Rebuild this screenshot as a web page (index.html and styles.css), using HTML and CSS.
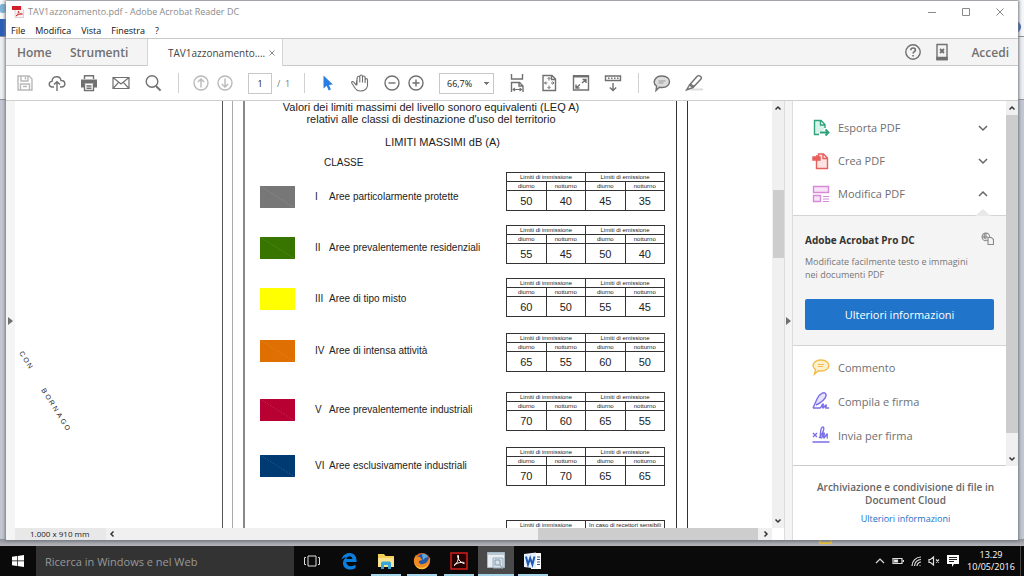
FILE: index.html
```html
<!DOCTYPE html>
<html lang="it">
<head>
<meta charset="utf-8">
<title>TAV1azzonamento.pdf - Adobe Acrobat Reader DC</title>
<link rel="stylesheet" href="styles.css">
</head>
<body>
<div class="desktop">
  <div class="backdrop" aria-hidden="true">
    <div class="back-head"><i class="back-logo"></i><i class="back-file"></i><i class="back-help"></i></div>
    <div class="back-body"></div>
    <div class="back-status"><i class="back-view"></i></div>
  </div>

  <div class="window">
    <header class="titlebar">
      <svg class="app-icon" viewBox="0 0 12 12"><path d="M3 1h6l2.500 3v7.500H3z" fill="#f7f1f1" stroke="#c9b9b9" stroke-width=".6"/><path d="M0 0h9v4H0z" fill="#d0202a"/><path d="M4 10c2-1.500 2.500-3.500 2.500-5 0 2 1.500 3 4 3-2.500 0-4.500.5-6.500 2z" fill="none" stroke="#d0202a" stroke-width=".8"/></svg>
      <h1 class="title">TAV1azzonamento.pdf - Adobe Acrobat Reader DC</h1>
      <div class="window-buttons">
        <button aria-label="Riduci"><svg viewBox="0 0 10 10"><path d="M1 5.500h8"/></svg></button>
        <button aria-label="Ingrandisci"><svg viewBox="0 0 10 10"><path d="M1.500 1.500h7v7h-7z"/></svg></button>
        <button aria-label="Chiudi"><svg viewBox="0 0 10 10"><path d="M1.500 1.500l7 7m0-7l-7 7"/></svg></button>
      </div>
    </header>
    <nav class="menubar">
      <button>File</button><button>Modifica</button><button>Vista</button><button>Finestra</button><button>?</button>
    </nav>
    <nav class="tabs">
      <button class="tab home">Home</button>
      <button class="tab tools">Strumenti</button>
      <div class="tab-active"><span>TAV1azzonamento....</span><button class="tab-close" aria-label="Chiudi scheda"><svg viewBox="0 0 6 6"><path d="M.5.5l5 5m0-5l-5 5"/></svg></button></div>
      <div class="account">
        <button aria-label="Guida"><svg class="ico" viewBox="0 0 18 18"><circle cx="9" cy="9" r="7.200"/><path d="M6.800 7.200c0-3 4.600-2.800 4.600-.2 0 1.700-2.300 1.800-2.300 3.600M9.100 12v1.600" stroke-width="1.600"/></svg></button>
        <button aria-label="Dispositivi"><svg class="ico" viewBox="0 0 18 18"><path d="M4 1.500h10v15H4z" /><path d="M4 14.500h10v2H4z" fill="#707070"/><path d="M7 6l4 4m0-4l-4 4" stroke-width="1.800"/></svg></button>
        <button class="login">Accedi</button>
      </div>
    </nav>

    <div class="toolbar">
      <button class="pale" aria-label="Salva"><svg class="ico" viewBox="0 0 18 18"><path d="M2 2h11l3 3v11H2zM5 2v5h7V2M4.500 16v-6h9v6M9.500 3v2.500M7 12.500h4"/></svg></button>
      <button aria-label="Carica"><svg class="ico" viewBox="0 0 18 18"><path d="M6 13H4.500C.2 13 .3 7.500 4 7.400 4.300 1.400 12.200 1.200 13 6.500c5-.2 5.200 6.500.5 6.500H12M9 17V8M6 10.600L9 7.800l3 2.800"/></svg></button>
      <button aria-label="Stampa"><svg class="ico" viewBox="0 0 18 18"><path d="M4.500 5V1.700h9V5"/><path d="M1 5.500h16v8h-3v-4H4v4H1z" fill="#707070" stroke="none"/><path d="M4.500 9.500v7h9v-7M6.500 12h5M6.500 14.300h5"/></svg></button>
      <button aria-label="Posta"><svg class="ico" viewBox="0 0 18 18"><path d="M1 3.500h16v11H1zM1 3.500l8 6.500 8-6.500M1 14.500l5.800-6.300M17 14.500l-5.800-6.300" stroke-width="1.200"/></svg></button>
      <button aria-label="Cerca"><svg class="ico" viewBox="0 0 18 18"><circle cx="8" cy="7.500" r="5.800"/><path d="M12 12l4.600 4.600" stroke-width="2"/></svg></button>
      <i class="sep"></i>
      <button class="small pale" aria-label="Pagina precedente"><svg class="ico" viewBox="0 0 18 18"><circle cx="9" cy="9" r="7"/><path d="M9 13.500V5M5.800 8L9 5l3.200 3"/></svg></button>
      <button class="small pale" aria-label="Pagina successiva"><svg class="ico" viewBox="0 0 18 18"><circle cx="9" cy="9" r="7"/><path d="M9 4.500V13M5.800 10L9 13l3.200-3"/></svg></button>
      <input class="page-number" type="text" value="1" aria-label="Numero di pagina">
      <span class="page-total">/&nbsp; 1</span>
      <i class="sep after-pages"></i>
      <button aria-label="Selezione"><svg class="ico" viewBox="0 0 18 18"><path d="M4.500 1.500v13l3.200-2.800 2 4.800 2.200-1-2-4.600 4-.4z" fill="#2a7de1" stroke="none"/></svg></button>
      <button aria-label="Mano"><svg class="ico" viewBox="0 0 18 18"><path d="M5 11L2.800 8.200C1.500 6.800 0 8 1 9.500l3.500 5.300C7 18.300 15.500 18 16.500 11.500V6c0-1.800-2.200-1.800-2.400 0V3.400c0-1.800-2.500-1.800-2.600 0v-1c-.1-1.800-2.600-1.800-2.700 0v1.100c-.1-1.600-2.400-1.600-2.500 0zM8.800 3v5.500M11.500 3v5.500M14.100 5v4M6 4v7" stroke-width="1.100"/></svg></button>
      <button class="small zoom-out" aria-label="Riduci zoom"><svg class="ico" viewBox="0 0 18 18"><circle cx="9" cy="9" r="7"/><path d="M5.500 9h7"/></svg></button>
      <button class="small" aria-label="Aumenta zoom"><svg class="ico" viewBox="0 0 18 18"><circle cx="9" cy="9" r="7"/><path d="M5.500 9h7M9 5.500v7"/></svg></button>
      <select class="zoom" aria-label="Zoom"><option>66,7%</option></select>
      <button aria-label="Adatta larghezza"><svg class="ico" viewBox="0 0 18 18"><path d="M3.500 0v5h11V0M3.500 18V8.500h8l3.500 3.500v6M11 8.500V12h4"/><path d="M5 15.500h8.500M7 13.800l-2 1.700 2 1.700M11.500 13.800l2 1.700-2 1.700" stroke-width="1.100"/></svg></button>
      <button aria-label="Adatta pagina"><svg class="ico" viewBox="0 0 18 18"><path d="M3 1.500h9l3.500 3.500v11.500H3zM11.500 1.500V5.500h4"/><path d="M9 3.500v3M9 11.500v3M4.500 9h3M11 9h3M7.500 5L9 3.500 10.500 5M7.500 13L9 14.500l1.500-1.500M6 7.500L4.500 9 6 10.500M12.500 7.500L14 9l-1.500 1.500" stroke-width="1"/></svg></button>
      <button aria-label="Schermo intero"><svg class="ico" viewBox="0 0 18 18"><path d="M1.500 2h15v14h-15z"/><path d="M1 1h16v2.500H1z" fill="#707070" stroke="none"/><path d="M10 9l4-3.500M10.500 5.500H14V9M8 10.500L4 14M4 10.500V14h3.500"/></svg></button>
      <button aria-label="Mostra barra"><svg class="ico" viewBox="0 0 18 18"><path d="M1.500 2h15v4.500h-15z"/><path d="M4 4.200h1.500m1.500 0h1.500m1.500 0h1.500m1.500 0h1.500M9 9v7.500M5.800 13.500L9 16.500l3.200-3"/></svg></button>
      <i class="sep"></i>
      <button aria-label="Commento"><svg class="ico" viewBox="0 0 18 18"><path d="M9 2c10 0 10 11.500 0 11.500-1 0-1.800-.1-2.600-.3L3 16.500l.6-4.500C-1 9 1.500 2 9 2z" fill="#ddd"/><path d="M5.500 7h7M5.500 9h5" stroke="#999" stroke-width="1"/></svg></button>
      <button aria-label="Evidenzia"><svg class="ico" viewBox="0 0 18 18"><path d="M7 14.500h11v2H5z" fill="#ddd" stroke="none"/><path d="M4.500 11L12 2.500c1.500-2 5.500 0 4 2.500L8 13.500zM4.500 11L1.500 16l6.500-2.500M5.500 10l3.500 2.500"/></svg></button>
    </div>

    <div class="content">
      <button class="gutter" aria-label="Mostra riquadro di navigazione"><i></i></button>
      <main class="viewer">
        <div class="page">
          <svg class="map" viewBox="0 0 207 427" preserveAspectRatio="xMinYMin meet"><g font-family="Liberation Sans, sans-serif" font-size="7" fill="#222"><text transform="translate(4 252) rotate(58)" x="0 7 14">CON</text><text transform="translate(26 289) rotate(58)" x="0 7 14 21 29 36 43">BORNAGO</text></g></svg>
          <div class="frame-outer"></div>
          <div class="frame-inner"></div>
          <section class="legend">
            <div class="legend-title">
              <p>Valori dei limiti massimi del livello sonoro equivalenti (LEQ A)</p>
              <p>relativi alle classi di destinazione d'uso del territorio</p>
            </div>
            <p class="legend-limits">LIMITI MASSIMI dB (A)</p>
            <p class="legend-class">CLASSE</p>
            <div class="legend-body">
              <ul class="classes">
                <li><i class="swatch gray"></i><b>I</b><span>Aree particolarmente protette</span></li>
                <li><i class="swatch green"></i><b>II</b><span>Aree prevalentemente residenziali</span></li>
                <li><i class="swatch yellow"></i><b>III</b><span>Aree di tipo misto</span></li>
                <li class="intense"><i class="swatch orange"></i><b>IV</b><span>Aree di intensa attività</span></li>
                <li class="industry"><i class="swatch red"></i><b>V</b><span>Aree prevalentemente industriali</span></li>
                <li class="industry-only"><i class="swatch blue"></i><b>VI</b><span>Aree esclusivamente industriali</span></li>
              </ul>
              <div class="limits">
                <table><tr><th colspan="2">Limiti di immissione</th><th colspan="2">Limiti di emissione</th></tr><tr><th>diurno</th><th>notturno</th><th>diurno</th><th>notturno</th></tr><tr><td>50</td><td>40</td><td>45</td><td>35</td></tr></table>
                <table><tr><th colspan="2">Limiti di immissione</th><th colspan="2">Limiti di emissione</th></tr><tr><th>diurno</th><th>notturno</th><th>diurno</th><th>notturno</th></tr><tr><td>55</td><td>45</td><td>50</td><td>40</td></tr></table>
                <table><tr><th colspan="2">Limiti di immissione</th><th colspan="2">Limiti di emissione</th></tr><tr><th>diurno</th><th>notturno</th><th>diurno</th><th>notturno</th></tr><tr><td>60</td><td>50</td><td>55</td><td>45</td></tr></table>
                <table class="step"><tr><th colspan="2">Limiti di immissione</th><th colspan="2">Limiti di emissione</th></tr><tr><th>diurno</th><th>notturno</th><th>diurno</th><th>notturno</th></tr><tr><td>65</td><td>55</td><td>60</td><td>50</td></tr></table>
                <table class="lower"><tr><th colspan="2">Limiti di immissione</th><th colspan="2">Limiti di emissione</th></tr><tr><th>diurno</th><th>notturno</th><th>diurno</th><th>notturno</th></tr><tr><td>70</td><td>60</td><td>65</td><td>55</td></tr></table>
                <table class="step"><tr><th colspan="2">Limiti di immissione</th><th colspan="2">Limiti di emissione</th></tr><tr><th>diurno</th><th>notturno</th><th>diurno</th><th>notturno</th></tr><tr><td>70</td><td>70</td><td>65</td><td>65</td></tr></table>
                <table class="last"><tr><th>Limiti di immissione</th><th>In caso di recettori sensibili</th></tr></table>
              </div>
            </div>
          </section>
          <div class="frame-right"></div>
        </div>
        <div class="vscroll">
          <svg class="arrow" viewBox="0 0 8 8"><path d="M1.500 5.500L4 3l2.500 2.500"/></svg>
          <i class="vthumb"></i>
          <svg class="arrow" viewBox="0 0 8 8"><path d="M1.500 2.500L4 5l2.500-2.500"/></svg>
        </div>
        <div class="hscroll">
          <span class="page-size">1.000 x 910 mm</span>
          <svg class="arrow" viewBox="0 0 8 8"><path d="M5.500 1.500L3 4l2.500 2.500"/></svg>
          <i class="hthumb"></i>
          <svg class="arrow" viewBox="0 0 8 8"><path d="M2.500 1.500L5 4 2.500 6.500"/></svg>
        </div>
      </main>
      <button class="gutter right" aria-label="Nascondi riquadro strumenti"><i></i></button>
      <aside class="panel">
        <div class="panel-scroll">
          <div class="panel-list">
            <div class="tool-group">
              <button class="tool"><svg viewBox="0 0 18 18" stroke="#2fa47c"><path d="M7 15.500H2.500v-14H9l4 4V9M8.500 1.500V6H13" fill="#d9f2e8"/><path d="M8 13.500h8M13.500 10.500l3 3-3 3" stroke-width="2"/></svg><span>Esporta PDF</span><svg class="chev" viewBox="0 0 10 10"><path d="M1 3l4 4 4-4"/></svg></button>
              <button class="tool"><svg viewBox="0 0 18 18" stroke="#e8605c"><path d="M4.500 8v8.500h11V6l-4-4h-5v3M11 2v4.500h4.500" fill="#fde3e1"/><path d="M1 5h7v3H1zM5 3v6" stroke-width="1.500" fill="#e8605c"/></svg><span>Crea PDF</span><svg class="chev" viewBox="0 0 10 10"><path d="M1 3l4 4 4-4"/></svg></button>
              <button class="tool"><svg viewBox="0 0 18 18" stroke="#d58bd8"><path d="M1.500 1.500h15v6h-15zM1.500 10.500h7v6h-7z" fill="#f8e3f9"/><path d="M11 11.500h6M11 14h6M11 16.500h6" stroke-width="1"/></svg><span>Modifica PDF</span><svg class="chev" viewBox="0 0 10 10"><path d="M1 7l4-4 4 4"/></svg></button>
            </div>
            <section class="promo">
              <i class="notch"></i>
              <div class="promo-head"><h2>Adobe Acrobat Pro DC</h2><svg viewBox="0 0 12 12"><circle cx="4.500" cy="4.500" r="3.500"/><path d="M1 4.500h5M4.500 1v6M3 1.500v5M6.500 5h3l2 2v4.500h-5z" fill="#f4f4f4"/></svg></div>
              <p>Modificate facilmente testo e immagini<br>nei documenti PDF</p>
              <button class="cta">Ulteriori informazioni</button>
            </section>
            <div class="tool-group lower-tools">
              <button class="tool"><svg viewBox="0 0 18 18" stroke="#f2bd4b"><path d="M9 2c10.500 0 10.500 11 0 11-1 0-1.800-.1-2.600-.3L2.500 16l1-4.500C-1.500 8 2 2 9 2z" fill="#fdf0cf"/><path d="M6 6.500h6M6 8.500h5" stroke-width="1"/></svg><span>Commento</span></button>
              <button class="tool"><svg viewBox="0 0 18 18" stroke="#7b6fe8"><path d="M1 16L5 7C8 1 13-1 14 2.500 15 6 9 11 4 13" fill="#e7e4ff"/><path d="M1 16h7c2-1 2-4 3-4s-1 4 0 4 2-3 3-3-1 3 0 3h3"/></svg><span>Compila e firma</span></button>
              <button class="tool"><svg viewBox="0 0 18 18" stroke="#7b6fe8"><path d="M1 7l4 4m0-4l-4 4M7 12C11 8 13 1 11 1 8 1 8 12 9 12c2 0 2-5 3-5s-1 5 0 5 2-4 3-4-1 4 1 4M.5 16h17"/></svg><span>Invia per firma</span></button>
            </div>
          </div>
          <div class="panel-bar">
            <svg class="arrow" viewBox="0 0 8 8"><path d="M1.500 5.500L4 3l2.500 2.500"/></svg>
            <i class="panel-thumb"></i>
            <svg class="arrow" viewBox="0 0 8 8"><path d="M1.500 2.500L4 5l2.500-2.500"/></svg>
          </div>
        </div>
        <footer class="cloud">
          <h2>Archiviazione e condivisione di file in<br>Document Cloud</h2>
          <a href="#">Ulteriori informazioni</a>
        </footer>
      </aside>
    </div>
  </div>
</div>

<footer class="taskbar">
  <button class="start" aria-label="Start"><svg viewBox="0 0 12 12"><path d="M0 1.700L5 1v4.600H0zM5.700.9L12 0v5.600H5.700zM0 6.300h5v4.700l-5-.7zM5.700 6.300H12V12l-6.300-.9z" fill="#fff"/></svg></button>
  <input class="search" type="text" placeholder="Ricerca in Windows e nel Web" aria-label="Ricerca">
  <div class="apps">
    <button aria-label="Visualizzazione attività"><svg viewBox="0 0 18 18" fill="none" stroke="#ddd"><path d="M5 4h8v10H5zM3 5.500H1.500v7H3M15 5.500h1.500v7H15"/></svg></button>
    <button aria-label="Edge"><svg viewBox="0 0 18 18"><path d="M1.500 8C2.500 3 6 1 9.500 1 14 1 17 4.300 16.500 10H6.200c.3 4.800 6 5 9.300 2.800v3.400C8 19.500 2.500 16 3 10.500 3.200 8 5 6 6.800 5.300 4.500 5.200 2.700 6.300 1.500 8zm4.900-1h6c0-4-5.500-3.500-6 0z" fill="#0b7fe0"/></svg></button>
    <button class="open" aria-label="Esplora file"><svg viewBox="0 0 18 18"><path d="M1 2h6l1.500 2H17v11H1z" fill="#f4cf55"/><path d="M1 6h16v9H1z" fill="#fbe38b"/><path d="M4 17v-5.500C4 10 5 9.500 6 9.500h6c1 0 2 .5 2 2V17h-3v-4H7v4z" fill="#37a6dd"/></svg></button>
    <button class="open" aria-label="Firefox"><svg viewBox="0 0 18 18"><circle cx="9" cy="9" r="8" fill="#e8651a"/><circle cx="10" cy="7.500" r="5.800" fill="#2458a6"/><path d="M9 2c3-1 5 1 6 3l-3 1-2 2z" fill="#5da6dc"/><path d="M1 7l2-4 1 2c3-1 4 1 5 3l-3 1c-1 4 5 4 8 1l3-5c1 7-3 12-8 12S0 13 1 7z" fill="#f08a24"/><path d="M2 12c3 5 10 5 13 0-1 7-11 7-13 0z" fill="#f7c23c"/></svg></button>
    <button class="open" aria-label="Acrobat"><svg viewBox="0 0 18 18"><path d="M1 1h16v16H1z" fill="#240000" stroke="#d21c1c" stroke-width="1.500"/><path d="M4 13.500C7 12 9 7 8.500 4c0-1.500-1.500-1-.8 1C8.500 8 11 11 14 11.500c1.500-.5-.5-1.500-2.500-1.200-3 .4-6 1.200-7.500 3.200z" fill="none" stroke="#fff"/></svg></button>
    <button class="open current" aria-label="Strumento di cattura"><svg viewBox="0 0 18 18"><path d="M.5.500h17v15H.5z" fill="#e9eef2" stroke="#a9b9c4"/><path d="M1 1h16v2H1z" fill="#b9c8d2"/><path d="M6 6h10v10H6z" fill="#d5e2ea" stroke="#9ab"/><path d="M8 8h5v5H8zM13 13l3 4" fill="none" stroke="#89a"/></svg></button>
    <button class="open" aria-label="Word"><svg viewBox="0 0 18 18"><path d="M7 1h10v16H7z" fill="#fff"/><path d="M13 5h3m-3 2.500h3M13 10h3m-3 2.500h3" stroke="#2b579a"/><path d="M0 2l12-1.500v16L0 15z" fill="#e8f0fb"/><path d="M2 4.500l2 8L6.200 6l2.200 6.500 2.100-8" fill="none" stroke="#1f5bb5" stroke-width="2"/></svg></button>
  </div>
  <div class="tray">
    <svg viewBox="0 0 12 12"><path d="M2 8l4-4 4 4"/></svg>
    <svg viewBox="0 0 12 12"><path d="M1 3.500h9v5H1zM11.500 5v2"/><path d="M2.500 5h3v2h-3z" fill="#fff"/></svg>
    <svg viewBox="0 0 12 12"><path d="M2 11C2 6 6 2 11 2M4.500 11c0-3.500 3-6.500 6.500-6.500M7 11c0-2 2-4 4-4M9.500 10.500h1"/></svg>
    <svg viewBox="0 0 12 12"><path d="M1 4.500h1.500L5.500 2v8L2.500 7.500H1zM8 4.500l3 3m0-3l-3 3"/></svg>
    <svg class="notify" viewBox="0 0 14 14"><path d="M1 1h12v9H8l-2 3v-3H1z" fill="#fff" stroke="none"/><path d="M3 3.500h8M3 5.500h8M3 7.500h5" stroke="#222"/></svg>
    <time class="clock"><span>13.29</span><span>10/05/2016</span></time>
  </div>
</footer>
</body>
</html>
```
FILE: styles.css
```css
* { box-sizing: border-box; }
body {
  margin: 0;
  height: 100vh;
  display: flex;
  flex-direction: column;
  overflow: hidden;
  font-family: "Open Sans", sans-serif;
  font-size: 9px;
  color: #222;
}
button, input, select { font: inherit; color: inherit; border: 0; background: none; padding: 0; margin: 0; }
h1, h2, p, ul { margin: 0; padding: 0; font-size: inherit; font-weight: 400; }
svg { display: block; flex: none; }

.desktop { position: relative; flex: 1; min-height: 0; padding: 1px 6px 6px; background: #a9acb3; display: flex; }
.backdrop { position: absolute; inset: 0; display: flex; flex-direction: column; background: #b9bec8; }
.back-head { position: relative; height: 100px; background: linear-gradient(#f5f6f8 0 36px, #8b9099 36px 37px, #eceef2 37px); border-bottom: 1px solid #8f949c; }
.back-logo { position: absolute; left: 0; top: 4px; width: 6px; height: 9px; background: #7eb4da; border-radius: 2px; }
.back-file { position: absolute; left: 0; top: 19px; width: 6px; height: 17px; background: #2a5db8; }
.back-help { position: absolute; right: 3px; top: 21px; width: 12px; height: 12px; border-radius: 50%; background: #3b62ad; }
.back-body { flex: 1; background: #c3c7d2; }
.back-status { position: relative; height: 7px; background: linear-gradient(#8f9298, #b4b6bb); }
.back-view { position: absolute; left: 80%; top: 0; width: 13px; height: 5px; border: 2px solid #e3bd3c; border-top: 0; }

.window { position: relative; flex: 1; min-width: 0; display: flex; flex-direction: column; background: #fff; box-shadow: 0 0 3px 1px #70757d; }

.titlebar { height: 21px; display: flex; align-items: center; padding: 0 1px 0 6px; gap: 4px; color: #8b8b8b; }
.app-icon { width: 12px; height: 12px; }
.title { flex: 1; line-height: 14px; }
.window-buttons { display: flex; }
.window-buttons button { width: 34px; height: 20px; display: grid; place-items: center; }
.window-buttons svg { width: 10px; height: 10px; fill: none; stroke: #8a8a8a; stroke-width: 1; }
.menubar { height: 16px; display: flex; align-items: center; gap: 10px; padding-left: 5px; color: #111; }

.tabs { height: 28px; display: flex; align-items: center; background: #f4f4f4; border-top: 1px solid #c9c9c9; border-bottom: 1px solid #c9c9c9; color: #707070; }
.tab { font-size: 12px; font-weight: 600; text-align: left; }
.home { margin-left: 11px; width: 53px; }
.tools { width: 77px; }
.tab-active { align-self: stretch; margin-bottom: -1px; width: 136px; display: flex; align-items: center; justify-content: space-between; padding: 0 7px 0 20px; background: #fff; border: solid #d4d4d4; border-width: 0 1px; color: #444; font-size: 10px; }
.tab-close svg { width: 6px; height: 6px; stroke: #888; fill: none; }
.account { margin-left: auto; display: flex; align-items: center; gap: 11px; padding-right: 9px; }
.login { font-size: 12px; font-weight: 600; margin-left: 9px; }
.ico { width: 18px; height: 18px; fill: none; stroke: #707070; stroke-width: 1.4; }

.toolbar { height: 35px; display: flex; align-items: center; padding-left: 3px; border-bottom: 1px solid #cfcfcf; }
.toolbar button { width: 32px; height: 28px; display: grid; place-items: center; flex: none; }
.toolbar .small { width: 24px; }
.pale .ico { stroke: #b9b9b9; }
.sep { width: 1px; height: 20px; background: #d0d0d0; margin: 0 7px 0 9px; flex: none; }
.sep + .small { margin-left: 3px; }
.page-number { width: 24px; height: 21px; margin-left: 11px; border: 1px solid #c8c8c8; text-align: center; }
.page-total { width: 15px; margin-left: 5px; color: #777; white-space: nowrap; }
.after-pages { margin-left: 12px; }
.toolbar .zoom-out { margin-left: 4px; }
.zoom { width: 55px; height: 21px; margin: 0 7px 0 11px; padding-left: 7px; border: 1px solid #c8c8c8; appearance: none; background: conic-gradient(from 315deg at 50% 100%, #777 90deg, transparent 0) 43px 8px / 6px 3px no-repeat; border-radius: 0; }

.content { flex: 1; min-height: 0; display: flex; }
.gutter { width: 9px; flex: none; background: #f4f4f4; display: grid; place-items: center; }
.gutter i { border: solid transparent; border-width: 4px 0 4px 5px; border-left-color: #707070; }
.gutter.right { border: solid #ddd; border-width: 0 1px; }
.viewer { flex: 1; min-width: 0; display: grid; grid-template-columns: 1fr 12px; grid-template-rows: minmax(0, 1fr) 12px; }
.page { display: flex; overflow: hidden; background: #fff; }
.map { width: 207px; height: 427px; }
.frame-outer { width: 11px; flex: none; border: solid #555; border-width: 0 1px; border-right-color: #aaa; }
.frame-inner { width: 12px; flex: none; border-right: 2px solid #888; }
.frame-right { width: 12px; flex: none; border: solid #333; border-width: 0 1px; }
.legend { width: 431px; flex: none; padding: 0 11px 0 15px; font: 11px/12px "Liberation Sans", sans-serif; color: #222; white-space: nowrap; }
.legend-title { width: 342px; text-align: center; }
.legend-limits { width: 365px; padding-top: 11px; text-align: center; }
.legend-class { padding: 9px 0 0 64px; font-size: 10px; }
.legend-body { display: flex; justify-content: space-between; padding-top: 3px; }
.classes { list-style: none; padding-top: 14px; display: flex; flex-direction: column; gap: 29px; font-size: 10px; }
.classes li { display: flex; align-items: center; height: 22px; }
.classes b { font-weight: 400; width: 14px; margin-left: 20px; }
.classes .intense { margin-top: 1px; }
.classes .industry { margin-top: 8px; }
.classes .industry-only { margin-top: 5px; }
.swatch { width: 35px; height: 22px; background-image: linear-gradient(to top right, transparent 49%, #ffffff28 50%, transparent 51%); }
.gray { background-color: #777; }
.green { background-color: #377500; }
.yellow { background-color: #ff0; }
.orange { background-color: #de6f00; }
.red { background-color: #b80033; }
.blue { background-color: #003a73; }
.limits { display: flex; flex-direction: column; gap: 14px; }
.limits table { width: 159px; table-layout: fixed; border-collapse: collapse; }
.limits th, .limits td { border: 1px solid #333; padding: 0; text-align: center; font-weight: 400; }
.limits th { font-size: 6px; line-height: 8px; height: 9px; }
.limits td { font-size: 11px; line-height: 18px; height: 20px; }
.limits .step { margin-top: 2px; }
.limits .lower { margin-top: 6px; }
.limits .last { margin-top: 20px; }

.vscroll { display: flex; flex-direction: column; align-items: center; background: #f0f0f0; }
.arrow { width: 8px; height: 8px; margin: 3px 2px; fill: none; stroke: #333; stroke-width: 1.5; }
.vthumb { width: 11px; height: 16%; margin: 75px 0 auto; background: #cdcdcd; }
.hscroll { display: flex; align-items: center; background: #f0f0f0; }
.page-size { width: 91px; padding-left: 15px; line-height: 12px; font-size: 8px; background: #e8e8e8; white-space: nowrap; }
.hthumb { width: 29%; height: 12px; margin: 0 2px 0 auto; background: #cdcdcd; }

.panel { width: 225px; flex: none; display: flex; flex-direction: column; }
.panel-scroll { flex: 1; min-height: 0; display: flex; }
.panel-list { flex: 1; overflow: hidden; border-bottom: 1px solid #ccc; }
.tool-group { padding: 10px 18px 5px 19px; color: #6f6f6f; }
.tool { width: 100%; height: 33px; display: flex; align-items: center; gap: 8px; font-size: 11px; text-align: left; }
.tool span { flex: 1; }
.tool svg { width: 18px; height: 18px; fill: none; stroke-width: 1.4; }
.tool .chev { width: 10px; height: 10px; stroke: #666; stroke-width: 1.5; }
.promo { position: relative; padding: 16px 12px 15px; background: #f4f4f4; border: solid #d4d4d4; border-width: 1px 0; color: #777; }
.notch { position: absolute; right: 15px; top: -7px; border: solid transparent; border-width: 0 8px 7px; border-bottom-color: #e8e8e8; }
.promo-head { display: flex; justify-content: space-between; height: 23px; }
.promo-head h2 { font-size: 10px; line-height: 16px; font-weight: 700; color: #333; }
.promo-head svg { width: 13px; height: 13px; fill: none; stroke: #8a8a8a; stroke-width: 1; }
.promo p { line-height: 13px; white-space: nowrap; }
.cta { width: 100%; height: 31px; margin-top: 18px; border-radius: 2px; background: #2074c9; color: #fff; font-size: 11px; }
.lower-tools { padding: 4px 18px 0 19px; }
.lower-tools .tool { height: 34px; }
.panel-bar { width: 12px; display: flex; flex-direction: column; align-items: center; background: #f0f0f0; }
.panel-bar .arrow { margin: 3px 2px; }
.panel-thumb { flex: 1; width: 12px; margin-bottom: 19px; background: #cdcdcd; }
.cloud { height: 74px; padding-top: 15px; text-align: center; }
.cloud h2 { font-size: 10px; line-height: 13px; font-weight: 600; color: #666; }
.cloud a { display: block; margin-top: 6px; line-height: 12px; color: #2070c8; text-decoration: none; }

.taskbar { height: 30px; flex: none; display: flex; background: #0a0a0a; color: #fff; }
.start { width: 36px; display: grid; place-items: center; }
.start svg { width: 12px; height: 12px; }
.search { width: 258px; padding: 0 9px; background: #333; font-size: 11px; }
.search::placeholder { color: #999; opacity: 1; }
.apps { width: 257px; display: grid; grid-template-columns: repeat(7, 1fr); }
.apps button { display: grid; place-items: center; }
.apps svg { width: 18px; height: 18px; }
.open { background: linear-gradient(#a5d5e8, #a5d5e8) center bottom / 30px 2px no-repeat; }
.current { background-color: #4a4a4a; background-size: 100% 2px; }
.tray { margin-left: auto; display: flex; align-items: center; gap: 6px; padding-right: 4px; border-right: 1px solid #444; margin-right: 3px; }
.tray svg { width: 12px; height: 12px; fill: none; stroke: #ddd; stroke-width: 1.2; }
.tray .notify { width: 14px; height: 14px; }
.clock { width: 50px; display: flex; flex-direction: column; align-items: center; line-height: 12px; }
```
